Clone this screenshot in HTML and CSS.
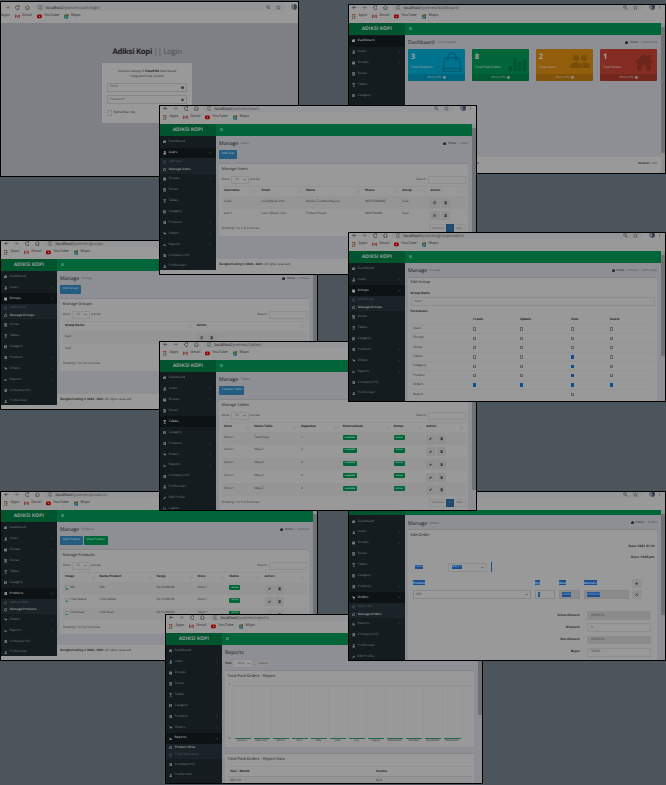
FILE: index.html
```html
<!DOCTYPE html>
<html lang="id">
<head>
<meta charset="utf-8">
<title>Adiksi Kopi</title>
<link rel="stylesheet" href="styles.css">
</head>
<body>
<main class="desk" id="desk"></main>
<script src="app.js"></script>
</body>
</html>
```
FILE: styles.css
```css
:root {
  --paper: #999;
  --page: #8d8f94;
  --green: #006639;
  --green-dark: #00552f;
  --side: #141c1f;
  --ink: #2c2c2c;
}
* { box-sizing: border-box; }
body {
  margin: 0;
  background: #4b555b;
  font-family: "Open Sans", "Noto Sans", sans-serif;
  font-size: 3.2px;
  line-height: 1.2;
  color: var(--ink);
  text-rendering: geometricPrecision;
}
svg { display: block; flex: none; }
.desk { position: relative; width: 666px; height: 785px; overflow: hidden; }

/* windows */
.win {
  position: absolute;
  width: 318px;
  height: 170px;
  border: 1px solid #000;
  background: var(--paper);
  overflow: hidden;
  display: flex;
  flex-direction: column;
}
.w-login { left: 0; top: 1px; width: 299px; height: 176px; }
.w-dash { left: 348px; top: 4px; }
.w-users { left: 159px; top: 105px; }
.w-groups { left: 0; top: 240px; }
.w-edit { left: 348px; top: 232px; }
.w-tables { left: 159px; top: 341px; }
.w-products { left: 0; top: 491px; }
.w-orders { left: 348px; top: 491px; }
.w-reports { left: 165px; top: 614px; }

/* browser chrome */
.chrome { flex: none; height: 17.7px; overflow: hidden; color: #333; }
.w-login .chrome { height: 21px; margin: 0 -9.5px; padding-top: 3px; }
.tools { display: flex; align-items: center; height: 8.6px; margin-top: -2px; padding-left: 3.3px; gap: 5.4px; }
.tools svg { width: 4.8px; height: 4.8px; }
.pill { display: flex; align-items: center; gap: 3px; flex: 1; height: 8.4px; padding: 0 5px 0 3.4px; margin-left: -.8px; border-radius: 5px; background: #949596; font-size: 4.1px; color: #444; line-height: 5px; }
.pill > span { padding-top: 1.8px; }
.pill b { font-weight: 400; color: #141414; }
.pill .grow { flex: 1; }
.pill svg + svg { margin-left: 2.6px; }
.avatar { width: 6px; height: 6px; border-radius: 3px; background: linear-gradient(90deg, #68717d 50%, #3c4350 50%); }
.tools .dots { width: 3px; margin: 0 4px 0 -2px; }
.marks { display: flex; align-items: center; height: 10px; padding-left: 2.6px; font-size: 3.75px; color: #2c2c2c; }
.marks span { display: flex; align-items: center; gap: 2.2px; margin-right: 4.9px; }
.marks svg { width: 4.8px; height: 4.8px; }

/* app shell */
.view { display: flex; flex: 1; min-height: 0; overflow: hidden; }
.app { flex: 1; min-width: 0; }
.scrolled .app { margin-top: -6.6px; }
.bar { display: flex; align-items: center; height: 12.3px; background: var(--green); }
.logo { width: 55.5px; height: 100%; display: flex; align-items: center; justify-content: center; background: var(--green-dark); color: #979f9a; font-weight: 700; font-size: 5.05px; }
.bar svg { width: 3.2px; height: 3.2px; margin-left: 4.3px; color: #83a893; }
.cols { display: flex; height: 150px; }
.side { flex: none; width: 55.5px; background: var(--side); color: #737f84; padding-top: .6px; }
.short .cols { height: 133.6px; overflow: hidden; }
.item { display: flex; align-items: center; height: 10.93px; padding: 0 3.6px 0 2.8px; gap: 2.2px; }
.item svg { width: 3.6px; height: 3.6px; }
.item .grow { flex: 1; }
.item > svg:last-child { width: 3px; height: 3px; opacity: .8; }
.item.on { background: #0d1214; color: #a2a2a2; font-weight: 600; }
.sub { background: #1a2327; height: 15.1px; color: #535f65; }
.sub div { display: flex; align-items: center; height: 7.5px; padding-left: 2.8px; gap: 2.4px; }
.sub svg { width: 3.6px; height: 3.6px; }
.sub .on { color: #a0a0a0; font-weight: 600; }
.page { flex: 1; min-width: 0; display: flex; flex-direction: column; background: var(--page); }
.body { flex: 1; padding: 0 4px 0 3.6px; }
.head { display: flex; align-items: center; height: 13.6px; padding-top: 1px; }
.head h1 { margin: 0; font-size: 5.15px; font-weight: 400; color: #1a1a1a; }
.head small { font-size: 3px; color: #4c4e51; margin: 1.3px 0 0 2.4px; }
.crumb { margin-left: auto; display: flex; align-items: center; gap: 1.4px; font-size: 2.85px; color: #4c4e51; }
.crumb b { font-weight: 400; color: #222; }
.crumb svg { width: 3.2px; height: 3.2px; color: #222; }
.foot { flex: none; height: 28.5px; padding: 4.2px 4px 0 3.8px; background: var(--paper); border-top: 1px solid #909193; display: flex; justify-content: space-between; font-size: 3.05px; }
.short .foot { margin-top: -1px; height: 12px; }
.scroll { flex: none; width: 4px; background: #8f8f91; padding-top: 4.6px; }
.scroll i { display: block; background: #707173; height: 126px; }
.w-edit .scroll i { height: 101px; }
.w-orders .scroll i { height: 101px; }
.w-reports .scroll i { height: 78px; }

/* boxes and tables */
.btns { display: flex; gap: 1px; height: 9.1px; }
.btn { display: flex; align-items: center; height: 9px; padding: 0 2.7px; border-radius: 1px; background: #245d80; color: #a6bac5; font-size: 3px; }
.btn.g { background: var(--green); color: #a3c7b3; }
.box { background: var(--paper); border-top: 1px solid #858587; border-radius: 1px; padding: 0 2.5px 2.5px; }
.btns + .box { margin-top: 4.5px; }
.box h2 { margin: 0; height: 10.2px; padding-top: 1.4px; display: flex; align-items: center; font-size: 3.95px; font-weight: 400; color: #202020; }
.filter { display: flex; align-items: center; gap: 1.4px; height: 10.6px; padding-top: .6px; font-size: 3px; color: #303030; }
.filter .search { margin-left: auto; }
.field { height: 7.4px; border: 1px solid #8d8d8e; display: flex; align-items: center; justify-content: space-between; padding: 0 2px; color: #444; background: var(--paper); }
.filter .len { width: 18px; padding-left: 3.5px; }
.filter .find { width: 37.5px; }
.field svg { width: 3px; height: 3px; color: #333; }
table { width: 100%; border-collapse: collapse; table-layout: fixed; }
th, td { text-align: left; padding: 0 2.3px; white-space: nowrap; overflow: hidden; }
.list { margin-top: .6px; }
.list th { height: 10px; font-size: 3.05px; color: #1e1e1e; border-top: 1px solid #929292; }
.list td { height: 12.75px; font-size: 3px; color: #303030; vertical-align: top; padding-top: 3.7px; }
.list tr:nth-child(even) td { background: #959595; }
.list th span { display: flex; justify-content: space-between; align-items: center; }
.list th svg { width: 3.2px; height: 3.2px; color: #808080; }
.acts { display: flex; gap: 1.5px; margin-top: -1.2px; }
.act { width: 9.2px; height: 9px; border-radius: 1px; background: #909090; color: #2c2c2c; display: flex; align-items: center; justify-content: center; }
.act svg { width: 3.3px; height: 3.3px; }
.badge { display: block; width: max-content; padding: .5px 2px; margin-top: -.6px; border-radius: 1px; background: var(--green); color: #a3b5ab; font-weight: 700; font-size: 2.3px; line-height: 3.9px; }
.noimg { display: flex; align-items: center; gap: .3px; margin-top: -.6px; }
.noimg svg { width: 4.6px; height: 4.6px; }
.under { display: flex; justify-content: space-between; align-items: center; height: 11.6px; font-size: 3.05px; color: #303030; padding-top: 2.6px; }
.pager { display: flex; height: 8.6px; border: 1px solid #909090; }
.pager span { display: flex; align-items: center; padding: 0 2.2px; font-size: 2.9px; color: #505050; }
.pager .cur { background: #1f4a70; color: #8fa6b8; padding: 0 3.2px; margin: -1px 0; }

/* dashboard cards */
.cards { display: grid; grid-template-columns: repeat(4, 1fr); gap: 7.4px; margin-top: .4px; }
.card { position: relative; height: 32px; border-radius: 1px; color: #a2a2a2; overflow: hidden; display: flex; flex-direction: column; }
.card strong { font-size: 7.6px; line-height: 9px; padding: 4.2px 2.6px 0; }
.card em { font-style: normal; font-size: 3.15px; font-weight: 600; padding: 4.2px 2.6px 0; opacity: .9; }
.card .more { margin-top: auto; height: 6.6px; background: rgba(0,0,0,.12); display: flex; align-items: center; justify-content: center; gap: .8px; opacity: .9; }
.card .more svg { width: 3px; height: 3px; }
.card .pic { position: absolute; right: 3px; top: 3px; width: 20px; height: 20px; color: rgba(0,0,0,.17); }
.c1 { background: #00738f; }
.c2 { background: #00663a; }
.c3 { background: #925e0b; }
.c4 { background: #852d22; }

/* login */
.login { flex: 1; background: #7e8085; display: flex; flex-direction: column; align-items: center; padding: 21.6px 5px 0 0; }
.login h1 { margin: 0; font-size: 7.7px; letter-spacing: -.26px; line-height: 14px; font-weight: 400; color: #4b4d51; white-space: nowrap; }
.login h1 b { color: #1e1e1e; }
.card-in { margin-top: 4px; width: 90px; height: 60px; background: var(--paper); padding: 6.2px 5px 0; text-align: center; color: #333; font-size: 3.15px; }
.card-in p { margin: 0; line-height: 4.8px; }
.card-in b { color: #1e1e1e; }
.login .field { height: 9px; margin-top: 3.4px; border-color: #858689; }
.login p + .field { margin-top: 4.4px; }
.remember { display: flex; align-items: center; gap: 1px; margin-top: 6.2px; color: #2c2c2c; }
.remember i { width: 5.4px; height: 5.4px; border: 1px solid #858689; }

/* group form */
.label { font-weight: 700; font-size: 3.05px; height: 7px; display: flex; align-items: center; color: #1e1e1e; }
.w-edit .box h2 { height: 12.4px; padding: 0; }
.wide + .label { height: 9.1px; padding-top: 3px; }
.box > .wide { height: 9px; padding-left: 3px; }
.perm { margin-top: .6px; }
.perm th { height: 8.6px; font-size: 3.05px; color: #1e1e1e; }
.perm td { height: 9.34px; border-top: 1px solid #959595; color: #303030; }
.chk { display: block; width: 3.4px; height: 3.4px; border: 1px solid #646464; }
.chk.y { background: #0b4c95; border-color: #0b4c95; }

/* order form */
.w-orders .box h2 { height: 11.4px; }
.dates { text-align: right; font-weight: 700; line-height: 10.6px; }
.hl { background: #1b508f; color: #8fabcd; padding: .5px 0; }
.pick { display: flex; align-items: center; height: 9px; padding-left: 4px; }
.pick .hl { margin-right: 25px; }
.pick .field { width: 39.5px; height: 9px; padding-left: 3px; }
.pick .field .hl { margin: 0; }
.caret { width: 1px; height: 9.6px; background: #1b508f; margin-left: 3.6px; }
.line { display: grid; grid-template-columns: 118px 20.4px 21px 45px 10px; column-gap: 3.8px; align-items: center; padding: 0 2.3px; height: 12.3px; }
.line.th { margin-top: 6.6px; height: 10.4px; font-weight: 700; }
.line .field { height: 8.6px; border-color: #878787; }
.line .grey, .sum .grey { background: #8b8b8c; }
.sums { display: flex; flex-direction: column; gap: 3.65px; margin-top: 10.4px; padding-right: 3.6px; align-items: flex-end; }
.sum { display: flex; align-items: center; gap: 7px; font-weight: 700; }
.sum .field { width: 64px; height: 8.6px; font-weight: 400; padding-left: 3px; }

/* reports */
.year { display: flex; align-items: center; gap: 1.6px; height: 9.6px; padding-top: .6px; font-size: 2.95px; margin-bottom: 2px; }
.year .field { height: 9px; width: 19.6px; padding-left: 3px; }
.year .sb { background: #929292; width: auto; padding: 0 3px; }
.chart { display: grid; grid-template-columns: 5px 1fr; height: 63px; padding: 3.2px 1px 0 0; font-size: 2.8px; color: #303030; }
.axis { display: flex; flex-direction: column; justify-content: space-between; height: 57.4px; margin-top: -2px; padding-left: 1px; }
.plot { display: grid; grid-template-columns: repeat(12, 1fr) 9px; }
.mon { display: flex; flex-direction: column; gap: .9px; text-align: center; }
.mon i { height: 54px; border: solid #959595; border-width: 1px 0 0 1px; border-top-color: #909090; display: flex; align-items: flex-end; }
.mon i::after { content: ""; flex: 1; height: 1px; margin: 0 1px; background: #1d6a46; }
.mon.end i::after { background: none; }
.box + .box { margin-top: 6.4px; }
.w-reports .box + .box h2 { height: 11.2px; }
.w-reports .list th { border-bottom: 1px solid #8c8c8c; }
.w-reports .list td { padding-top: 2.4px; }
```
FILE: app.js
```js
const shapes = {
  back: '<path d="M9 5H1.5M5 1.5L1.5 5 5 8.500" fill="none" stroke="currentColor" stroke-width="1.3"/>',
  fwd: '<path d="M1 5h7.500M5 1.500L8.500 5 5 8.500" fill="none" stroke="currentColor" opacity=".6" stroke-width="1.200"/>',
  reload: '<path d="M8.300 3A4 4 0 1 0 9 6M8.800 .8v2.800H6" fill="none" stroke="currentColor" stroke-width="1.400"/>',
  house: '<path d="M.5 5L5 1l4.500 4M2 4.500V9h6V4.500" fill="none" stroke="currentColor" stroke-width="1.300"/>',
  info: '<circle cx="5" cy="5" r="4.300" fill="none" stroke="currentColor"/><path d="M5 2.300v1M5 4.400v3.200" stroke="currentColor" stroke-width="1.200"/>',
  lens: '<circle cx="4" cy="4" r="2.800" fill="none" stroke="currentColor" stroke-width="1.300"/><path d="M6 6l3.500 3.500" stroke="currentColor" stroke-width="1.500"/>',
  star: '<path d="M5 1l1.200 2.800 3 .2L7 6l.7 3L5 7.400 2.300 9 3 6 .8 4l3-.2z" fill="none" stroke="currentColor"/>',
  dots: '<path d="M5 .5v2M5 4v2M5 7.500v2" stroke="currentColor" stroke-width="2"/>',
  apps: '<path d="M0 0h2.600v2.600H0zM0 7.400h2.600V10H0zM3.700 0h2.600v2.600H3.700z" fill="#97322c"/><path d="M7.400 0H10v2.600H7.400zM0 3.700h2.600v2.600H0zM7.400 7.400H10V10H7.400z" fill="#97781a"/><path d="M3.700 3.700h2.600v2.600H3.700zM7.400 3.700H10v2.600H7.400z" fill="#2d5c92"/><path d="M3.700 7.400h2.600V10H3.700z" fill="#2b7540"/>',
  gmail: '<path d="M0 1.500h10v7H0z" fill="#8f8987"/><path d="M1 8.500V2l4 3.600L9 2v6.500" fill="none" stroke="#8c2c27" stroke-width="1.700"/>',
  tube: '<rect y="1" width="10" height="8" rx="2" fill="#970000"/><path d="M4 3.200L7 5 4 6.800z" fill="#999"/>',
  maps: '<rect x="0" y="1" width="8.500" height="8.500" rx="1" fill="#2b7540"/><path d="M8.500 2v7.500H2z" fill="#2d5c92"/><path d="M1 9l6-6" stroke="#999" stroke-width="1.200"/><circle cx="7.700" cy="2.300" r="2.300" fill="#97322c"/>',
  bars: '<path d="M0 2h10M0 5h10M0 8h10" stroke="currentColor" stroke-width="1.500"/>',
  dash: '<path d="M0 8.500V5.500a5 5 0 0 1 10 0v3z" fill="currentColor"/><path d="M5 7.500l1.500-4" stroke="#141c1f"/>',
  user: '<circle cx="5" cy="2.700" r="2.500" fill="currentColor"/><path d="M.8 10V7.500Q1 5.500 5 5.500t4.200 2V10z" fill="currentColor"/>',
  users: '<circle cx="2.200" cy="2.500" r="1.800" fill="currentColor"/><circle cx="7.800" cy="2.500" r="1.800" fill="currentColor"/><circle cx="5" cy="4.500" r="2.200" fill="currentColor"/><path d="M0 4.500h10V7L8.500 9.500h-7L0 7z" fill="currentColor"/>',
  bank: '<path d="M0 1h10v2H0zM1 3.500h8v4H1zM0 8h10v1.500H0z" fill="currentColor"/>',
  glass: '<path d="M0 .5h10L6 5v3.500h2.500V10h-7V8.500H4V5z" fill="currentColor"/>',
  list: '<path d="M0 .8h10v8.400H0z" fill="currentColor"/><path d="M1 3.500h8M1 5.500h8M1 7.500h8M3.300 2.500V9" stroke="#141c1f" stroke-width=".6"/>',
  book: '<path d="M1.500 0h7v10H6V7.500H4V10H1.500z" fill="currentColor"/><path d="M3 2h4M3 4.500h4" stroke="#141c1f" stroke-width=".8"/>',
  cart: '<path d="M0 1h2l.4 1.200H10L9 6.500H3L1.500 2H0z" fill="currentColor"/><circle cx="3.800" cy="8.500" r="1" fill="currentColor"/><circle cx="8" cy="8.500" r="1" fill="currentColor"/>',
  graph: '<path d="M.6 1v8H10" fill="none" stroke="currentColor" stroke-width="1.200"/><path d="M2 5h1.500v3H2zM4.200 3h1.500v5H4.200zM6.400 4h1.500v4H6.400zM8.500 1.500H10V8H8.500z" fill="currentColor"/>',
  pen: '<path d="M1 9l.7-2.700L6.500 1.500 8.500 3.500 3.700 8.300z" fill="currentColor"/>',
  power: '<path d="M4 1H1v8h3M3 5h5.500M6 2.500L8.800 5 6 7.500" fill="none" stroke="currentColor" stroke-width="1.300"/>',
  ring: '<circle cx="5" cy="5" r="3.700" fill="none" stroke="currentColor" stroke-width="1.800"/>',
  left: '<path d="M6.500 2L3.500 5l3 3" fill="none" stroke="currentColor" stroke-width="1.500"/>',
  down: '<path d="M1 3l4 4 4-4" fill="none" stroke="currentColor" stroke-width="1.700"/>',
  sort: '<path d="M2 1v8M1 7.500L2 9l1-1.500M5.500 2h1.500M5.500 4.500h2.500M5.500 7h3.500" fill="none" stroke="currentColor"/>',
  edit: '<path d="M7.500 5.500V9H1V2h4.500" fill="none" stroke="currentColor" stroke-width="1.200"/><path d="M3.500 7l.4-1.900L8 1l1.400 1.400-4.100 4.100z" fill="currentColor"/>',
  trash: '<path d="M1 1.500h8v1.300H1zM2 3.500h6V10H2zM3.700.4h2.600v1H3.700z" fill="currentColor"/>',
  mail: '<path d="M0 1.500h10v7.500H0z" fill="currentColor"/><path d="M1 3l4 3 4-3" fill="none" stroke="#999"/>',
  lock: '<path d="M1 4.500h8V10H1z" fill="currentColor"/><path d="M3 5V3a2 2 0 0 1 4 0v2" fill="none" stroke="currentColor" stroke-width="1.400"/>',
  broken: '<path d="M.5.5h6l3 3v6h-9z" fill="#8ba0b2" stroke="#555" stroke-width=".8"/><path d="M1 9l3-4 3 4z" fill="#2f7040"/>',
  plus: '<path d="M5 1v8M1 5h8" stroke="currentColor" stroke-width="2.200"/>',
  cross: '<path d="M1.500 1.500l7 7M8.500 1.500l-7 7" stroke="currentColor" stroke-width="2.200"/>',
  arrow: '<circle cx="5" cy="5" r="4.800" fill="currentColor"/><path d="M2.500 5h5M5.300 2.800L7.500 5 5.300 7.200" fill="none" stroke="#333"/>',
  bag: '<path d="M1.400 3h7.200l1 6.800H.4z" fill="none" stroke="currentColor" stroke-width=".8"/><path d="M.6 8.200h8.800M3 4.600V2.400a2 2 0 0 1 4 0v2.200" fill="none" stroke="currentColor" stroke-width=".8"/>',
  stats: '<path d="M1.300 7h1.600v2.500H1.300zM3.700 2.500h1.600v7H3.700zM6.100 5h1.600v4.500H6.100zM8.400 3.800H10v5.700H8.400z" fill="currentColor"/>',
  people: '<circle cx="3" cy="3" r="1.500" fill="currentColor"/><circle cx="7" cy="3" r="1.500" fill="currentColor"/><path d="M0 8V7q.2-1.700 3-1.700T6 7v1zM6.400 8V6.500L6 5.500q4-.7 4 1.500v1z" fill="currentColor"/>',
  home: '<path d="M5 .7L0 5.500h1.500V9.300h2.500V6.500h2v2.800h2.500V5.500H10L8.200 3.800V1.500H7v1.100z" fill="currentColor"/>'
};
const ico = (n, c = '') => `<svg class="${c}" viewBox="0 0 10 10">${shapes[n]}</svg>`;

const chrome = path => `<div class="chrome"><div class="tools">${ico('back')}${ico('fwd')}${ico('reload')}${ico('house')}
<div class="pill">${ico('info')}<span><b>localhost</b>/yomres/${path}</span><span class="grow"></span>${ico('lens')}${ico('star')}</div>
<span class="avatar"></span>${ico('dots', 'dots')}</div>
<div class="marks"><span>${ico('apps')}Apps</span><span>${ico('gmail')}Gmail</span><span>${ico('tube')}YouTube</span><span>${ico('maps')}Maps</span></div></div>`;

const menu = [['dash', 'Dashboard'], ['user', 'Users', 1], ['users', 'Groups', 1], ['bank', 'Stores'], ['glass', 'Tables'],
  ['list', 'Category'], ['book', 'Products', 1], ['cart', 'Orders', 1], ['graph', 'Reports', 1], ['book', 'Company Info'],
  ['user', 'Profile User'], ['pen', 'Edit Profile'], ['power', 'Logout']];

const side = (active, subs, on = 1, count = 11) => `<nav class="side">${menu.slice(0, count).map(([i, t, a]) =>
  `<div class="item${t === active ? ' on' : ''}">${ico(i)}<span>${t}</span><span class="grow"></span>${a ? ico('left') : ''}</div>` +
  (t === active && subs ? `<div class="sub">${subs.map((s, k) => `<div class="${k === on ? 'on' : ''}">${ico('ring')}${s}</div>`).join('')}</div>` : '')
).join('')}</nav>`;

const head = (t, s, crumbs) => `<div class="head"><h1>${t}</h1><small>${s}</small>${crumbs ?
  `<div class="crumb">${ico('dash')}<b>Home</b>${crumbs.map(c => `<span>&gt;</span><span>${c}</span>`).join('')}</div>` : ''}</div>`;
const foot = '<div class="foot"><span><b>BengkelCoding © 2020 - 2021.</b> All rights reserved.</span><span><b>Version</b> 1.0.0</span></div>';
const footShort = '<div class="foot"><span><b>BengkelCoding © 2020 - 2021.</b> All rights reserved.</span></div>';

const win = (cls, path, nav, body, footer = '') => `<section class="win ${cls}">${chrome(path)}<div class="view"><div class="app">
<div class="bar"><div class="logo">${cls.includes('scrolled') ? '' : 'ADIKSI KOPI'}</div>${cls.includes('scrolled') ? '' : ico('bars')}</div>
<div class="cols">${nav}<div class="page"><div class="body">${body}</div>${footer}</div></div></div>
<div class="scroll"><i></i></div></div></section>`;

const acts = i => `<div class="acts"><span class="act">${ico(i)}</span><span class="act">${ico('trash')}</span></div>`;
const badge = t => `<span class="badge">${t}</span>`;
const table = (cls, widths, heads, rows) => `<table class="list ${cls}"><colgroup>${widths.map(w => `<col style="width:${w}px">`).join('')}</colgroup>
<tr>${heads.map(h => `<th><span>${h}${ico('sort')}</span></th>`).join('')}</tr>
${rows.map(r => `<tr>${r.map(c => `<td>${c}</td>`).join('')}</tr>`).join('')}</table>`;
const listBox = (title, tbl, n) => `<div class="box"><h2>${title}</h2>
<div class="filter">Show <span class="field len">10${ico('down')}</span> entries <span class="search">Search:</span><span class="field find"></span></div>
${tbl}<div class="under"><span>Showing 1 to ${n} of ${n} entries</span><div class="pager"><span>Previous</span><span class="cur">1</span><span>Next</span></div></div></div>`;
const btns = (...b) => `<div class="btns">${b.map((t, i) => `<span class="btn${i ? ' g' : ''}">${t}</span>`).join('')}</div>`;

const login = `<section class="win w-login">${chrome('auth/login')}<div class="login"><h1><b>Adiksi Kopi</b> || Login</h1>
<div class="card-in"><p>Selamat datang di <b>HosePOS</b> Web Based<br>Integrated Cafe System</p>
<div class="field">Email${ico('mail')}</div><div class="field">Password${ico('lock')}</div>
<div class="remember"><i></i>Remember Me</div></div></div></section>`;

const card = (c, n, t, i) => `<div class="card ${c}">${ico(i, 'pic')}<strong>${n}</strong><em>${t}</em><div class="more">More info ${ico('arrow')}</div></div>`;
const dashboard = win('w-dash', 'dashboard', side('Dashboard'), head('Dashboard', 'Control panel', ['Dashboard']) +
  `<div class="cards">${card('c1', 3, 'Total Products', 'bag')}${card('c2', 8, 'Total Paid Orders', 'stats')}${card('c3', 2, 'Total Users', 'people')}${card('c4', 1, 'Total Stores', 'home')}</div>`, foot);

const usersWin = win('w-users short', 'users', side('Users', ['Add User', 'Manage Users']), head('Manage', 'Users', ['Users']) + btns('Add User') +
  listBox('Manage Users', table('', [37.7, 44.3, 59, 37.3, 28.3, 37.3], ['Username', 'Email', 'Name', 'Phone', 'Group', 'Action'], [
    ['staffs', 'staffs@staff.com', 'Alfatha Tiandika Wiguna', '085315084405', 'Staff', acts('edit')],
    ['kasir1', 'kasir1@kasir.com', 'Firdaus Husain', '0888738200', 'Kasir', acts('edit')]]), 2), footShort);

const groupsWin = win('w-groups short', 'groups', side('Groups', ['Add Group', 'Manage Groups']), head('Manage', 'Groups', ['Groups']) + btns('Add Group') +
  listBox('Manage Groups', table('', [131.7, 112], ['Group Name', 'Action'], [['Kasir', acts('edit')], ['Staff', acts('edit')]]), 2), footShort);

const perms = [['Users', '0000'], ['Groups', '0000'], ['Stores', '0000'], ['Tables', '0010'], ['Category', '0010'], ['Product', '0010'], ['Orders', '1111'], ['Report', '--0-']];
const editWin = win('w-edit', 'groups/edit/6', side('Groups', ['Add Group', 'Manage Groups']), head('Manage', 'Groups', ['Groups', 'Edit Group']) +
  `<div class="box"><h2>Edit Group</h2><div class="label">Group Name</div><div class="field wide">Kasir</div><div class="label">Permission</div>
<table class="perm"><colgroup>${[60, 46.7, 51, 38.500, 47].map(w => `<col style="width:${w}px">`).join('')}</colgroup>
<tr><th></th><th>Create</th><th>Update</th><th>View</th><th>Delete</th></tr>
${perms.map(([n, p]) => `<tr><td>${n}</td>${[...p].map(c => `<td>${c === '-' ? '-' : `<span class="chk${c === '1' ? ' y' : ''}"></span>`}</td>`).join('')}</tr>`).join('')}</table></div>`);

const tablesWin = win('w-tables', 'tables/', side('Tables', null, 1, 13), head('Manage', 'Tables', ['Tables']) + btns('Tambah Table') +
  listBox('Manage Tables', table('', [30.3, 46.7, 41.7, 50.7, 32.7, 41.3], ['Store', 'Nama Table', 'Kapasitas', 'Ketersediaan', 'Status', 'Action'],
    [['Take Away', 1], ['Meja 2', 2], ['Meja 3', 4], ['Meja 4', 4], ['Meja 5', 4]].map(([n, k]) => ['Store 1', n, k, badge('available'), badge('active'), acts('pen')])), 5));

const productsWin = win('w-products short', 'products', side('Products', ['Add product', 'Manage Products']), head('Manage', 'Products', ['Products']) + btns('Add Product', 'View Product') +
  listBox('Manage Products', table('', [34.3, 57, 40.7, 31.7, 35.3, 44], ['Image', 'Nama Product', 'Harga', 'Store', 'Status', 'Action'],
    [['V60', 'Rp 23.000,00'], ['Cilok Seblak', 'Rp 10.000,00'], ['Cilok Kuah', 'Rp 10.000,00']].map(([n, p]) =>
      [`<span class="noimg">${ico('broken')}${n}</span>`, n, p, 'Store 1', badge('active'), acts('pen')])), 3), footShort);

const hl = t => `<span class="hl">${t}</span>`;
const ordersWin = win('w-orders scrolled', 'orders/update', side('Orders', ['Add order', 'Manage Orders'], 1, 12), head('Manage', 'Orders', ['Orders']) +
  `<div class="box"><h2>Edit Order</h2><div class="dates">Date: 2021-01-24<br>Date: 10:05 pm</div>
<div class="pick">${hl('Table')}<span class="field">${hl('Meja 2')}${ico('down')}</span><span class="caret"></span></div>
<div class="line th"><span>${hl('Product')}</span><span>${hl('Qty')}</span><span>${hl('Rate')}</span><span>${hl('Amount')}</span><span class="act">${ico('plus')}</span></div>
<div class="line"><span class="field">V60${ico('down')}</span><span class="field">${hl('1')}</span><span class="field grey">${hl('23000')}</span><span class="field grey">${hl('23000.00')}</span><span class="act">${ico('cross')}</span></div>
<div class="sums">${[['Gross Amount', '23000.00', 1], ['Discount', '0'], ['Net Amount', '23000.00', 1], ['Bayar', '30000'], ['Kembalian', '7000.00', 1]].map(([l, v, g]) =>
    `<div class="sum">${l}<span class="field${g ? ' grey' : ''}">${v}</span></div>`).join('')}</div></div>`);

const months = ['January', 'February', 'March', 'April', 'May', 'June', 'July', 'August', 'September', 'October', 'November', 'December'];
const reportsWin = win('w-reports', 'reports', side('Reports', ['Product Wise', 'Total Store wise'], 0), head('Reports', '') +
  `<div class="year"><b>Year</b><span class="field">2020${ico('down')}</span><span class="field sb">Submit</span></div>
<div class="box"><h2>Total Paid Orders - Report</h2><div class="chart"><div class="axis"><span>1</span><span>0</span></div>
<div class="plot">${months.map(m => `<div class="mon"><i></i>${m}</div>`).join('')}<div class="mon end"><i></i></div></div></div></div>
<div class="box"><h2>Total Paid Orders - Report Data</h2><table class="list"><colgroup><col style="width:146px"><col></colgroup>
<tr><th>Year - Month</th><th>Income</th></tr><tr><td>2021-01</td><td>Rp 0</td></tr></table></div>`);

document.getElementById('desk').innerHTML = login + dashboard + groupsWin + productsWin + reportsWin + ordersWin + usersWin + tablesWin + editWin;
```
